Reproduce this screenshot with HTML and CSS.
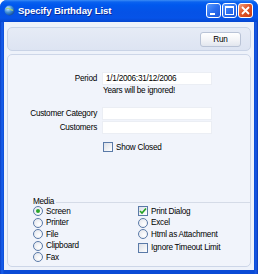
FILE: index.html
```html
<!DOCTYPE html>
<html>
<head>
<meta charset="utf-8">
<link rel="stylesheet" href="styles.css">
</head>
<body>
<div class="window">
  <div class="titlebar">
    <svg class="app-icon" width="11" height="11" viewBox="0 0 11 11">
      <defs>
        <radialGradient id="g" cx="0.35" cy="0.3" r="0.8">
          <stop offset="0" stop-color="#cfe8ff"/>
          <stop offset="0.5" stop-color="#3f8fd8"/>
          <stop offset="1" stop-color="#0d3f8a"/>
        </radialGradient>
      </defs>
      <circle cx="5.5" cy="5.5" r="5" fill="url(#g)"/>
      <path d="M2 4 Q4 2.5 6 4 T9 5" stroke="#9fd07a" stroke-width="1.2" fill="none"/>
    </svg>
    <span class="title">Specify Birthday List</span>
    <div class="controls">
      <div class="ctl ctl-min"><span class="min-bar"></span></div>
      <div class="ctl ctl-max"><span class="max-box"></span></div>
      <div class="ctl ctl-close">
        <svg width="9" height="9" viewBox="0 0 9 9"><path d="M1 1 L8 8 M8 1 L1 8" stroke="#fff" stroke-width="1.8"/></svg>
      </div>
    </div>
  </div>
  <div class="client">
    <div class="toolbar">
      <button class="btn">Run</button>
    </div>
    <div class="main">
      <div class="form">
        <div class="row">
          <span class="lbl">Period</span>
          <span class="field">1/1/2006:31/12/2006</span>
        </div>
        <div class="note">Years will be ignored!</div>
        <div class="row row-cat">
          <span class="lbl">Customer Category</span>
          <span class="field"></span>
        </div>
        <div class="row row-cust">
          <span class="lbl">Customers</span>
          <span class="field"></span>
        </div>
        <div class="check-row">
          <span class="chk"></span>
          <span>Show Closed</span>
        </div>
      </div>
      <div class="media">
        <div class="media-head"><span>Media</span></div>
        <div class="media-cols">
          <div class="col col-left">
            <div class="opt"><span class="radio on"></span>Screen</div>
            <div class="opt"><span class="radio"></span>Printer</div>
            <div class="opt"><span class="radio"></span>File</div>
            <div class="opt"><span class="radio"></span>Clipboard</div>
            <div class="opt"><span class="radio"></span>Fax</div>
          </div>
          <div class="col col-right">
            <div class="opt"><span class="chk on">
              <svg width="8" height="8" viewBox="0 0 8 8"><path d="M1 4 L3 6 L7 1.5" stroke="#21a121" stroke-width="1.6" fill="none"/></svg>
            </span>Print Dialog</div>
            <div class="opt"><span class="radio"></span>Excel</div>
            <div class="opt"><span class="radio"></span>Html as Attachment</div>
            <div class="opt opt-gap"><span class="chk"></span>Ignore Timeout Limit</div>
          </div>
        </div>
      </div>
    </div>
  </div>
</div>
</body>
</html>
```

FILE: styles.css
```css
* { box-sizing: border-box; }
html, body { margin: 0; padding: 0; background: #ffffff; }
body {
  font-family: "Liberation Sans", Arial, sans-serif;
  font-size: 8.2px;
  letter-spacing: -0.25px;
  color: #000;
}
.window {
  width: 258px;
  height: 274px;
  border-radius: 7px 7px 0 0;
  display: flex;
  flex-direction: column;
  padding: 0 4px 4px 4px;
  background: linear-gradient(to right, #0a3fc4 0, #1860ee 2px, #0a4bd6 4px, #0a4bd6 254px, #1a5ae4 256px, #0838b8 258px);
}
.titlebar {
  height: 22px;
  margin: 0 -4px;
  padding: 0 4px 0 4px;
  display: flex;
  align-items: center;
  border-radius: 7px 7px 0 0;
  background: linear-gradient(to bottom, #3b8cf5 0, #0a62f0 2px, #0058ee 5px, #0552e6 12px, #0653e8 18px, #0546d0 22px);
}
.app-icon { margin-top: -1px; flex: none; }
.title {
  margin-left: 3px;
  color: #fff;
  font-weight: bold;
  font-size: 9.6px;
  letter-spacing: -0.1px;
  text-shadow: 1px 1px 0 #0a2a9a;
  margin-top: -1px;
}
.controls {
  margin-left: auto;
  display: flex;
  gap: 1px;
  padding-right: 1px;
  margin-top: -1px;
}
.ctl {
  width: 15px;
  height: 15px;
  border: 1px solid #fff;
  border-radius: 3px;
  display: flex;
  align-items: center;
  justify-content: center;
  background: linear-gradient(135deg, #5a9bff 0, #2c6ff0 50%, #1a55d8 100%);
}
.ctl-close {
  background: linear-gradient(135deg, #f0a080 0, #e0562a 45%, #c83c12 100%);
}
.min-bar {
  width: 5px;
  height: 2px;
  background: #fff;
  margin-top: 7px;
  margin-right: 3px;
}
.max-box {
  width: 9px;
  height: 9px;
  border: 1px solid #fff;
  border-top-width: 2px;
}
.client {
  flex: 1;
  background: #eef2fa;
  padding: 5px 3px 3px 3px;
  display: flex;
  flex-direction: column;
  gap: 3px;
}
.toolbar {
  height: 24px;
  flex: none;
  border: 1px solid #c9d3e6;
  border-radius: 5px;
  background: linear-gradient(to bottom, #e6ebf6, #dde4f2);
  display: flex;
  justify-content: flex-end;
  align-items: center;
  padding-right: 9px;
}
.btn {
  width: 41px;
  height: 15px;
  padding: 0;
  font-family: "Liberation Sans", Arial, sans-serif;
  font-size: 8.2px;
  letter-spacing: -0.25px;
  color: #000;
  border: 1px solid #b9c3d6;
  border-radius: 3px;
  background: linear-gradient(to bottom, #ffffff 0, #f4f5f8 50%, #e2e6ee 100%);
}
.main {
  flex: 1;
  border: 1px solid #cdd6e8;
  border-radius: 5px;
  background: #f1f4fb;
  display: flex;
  flex-direction: column;
  padding: 17px 0 3px 0;
}
.form { display: flex; flex-direction: column; }
.row {
  display: flex;
  align-items: center;
  height: 13px;
}
.lbl {
  width: 89px;
  text-align: right;
  flex: none;
}
.field {
  margin-left: 5px;
  width: 110px;
  height: 13px;
  background: #fff;
  border: 1px solid #ebeef4;
  line-height: 11px;
  padding-left: 3px;
}
.note {
  margin-left: 95px;
  height: 12px;
  line-height: 12px;
}
.row-cat { margin-top: 10px; }
.row-cust { margin-top: 1px; }
.check-row {
  margin-top: 8px;
  margin-left: 95px;
  display: flex;
  align-items: center;
  height: 10px;
  gap: 3px;
}
.chk {
  width: 10px;
  height: 10px;
  flex: none;
  border: 1px solid #5a7aa8;
  background: linear-gradient(135deg, #dcdfe6, #ffffff);
  display: flex;
  align-items: center;
  justify-content: center;
}
.media { margin-top: auto; }
.media-head {
  display: flex;
  align-items: center;
  height: 9px;
  padding-left: 25px;
}
.media-head::after {
  content: "";
  flex: 1;
  height: 1px;
  background: #d5dbe7;
  margin-left: 2px;
  margin-top: 2px;
}
.media-cols { display: flex; }
.col { display: flex; flex-direction: column; }
.col-left { margin-left: 25px; width: 105px; }
.opt {
  display: flex;
  align-items: center;
  height: 11.5px;
  gap: 3px;
}
.opt-gap { margin-top: 2px; }
.radio {
  width: 10px;
  height: 10px;
  flex: none;
  border: 1px solid #5a7aa8;
  border-radius: 50%;
  background: radial-gradient(circle at 65% 65%, #ffffff 0, #e6e8ee 80%);
  display: flex;
  align-items: center;
  justify-content: center;
}
.radio.on::after {
  content: "";
  width: 4px;
  height: 4px;
  border-radius: 50%;
  background: #2aa52a;
}
```
